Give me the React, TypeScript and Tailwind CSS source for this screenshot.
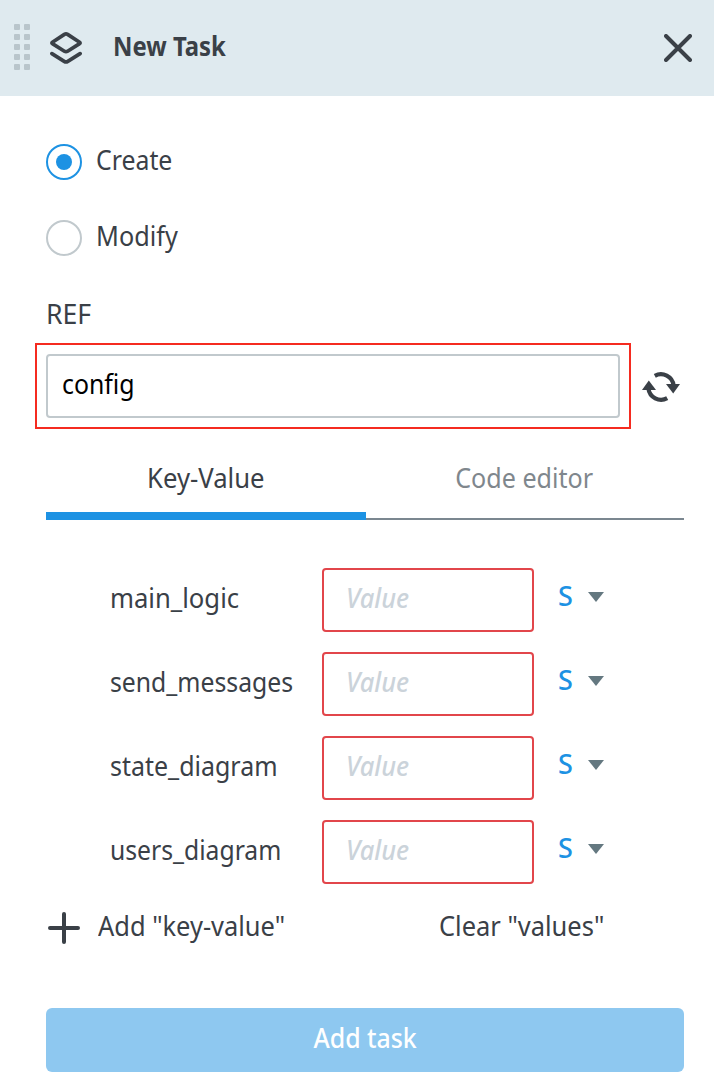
import React from 'react';

const fields = ['main_logic', 'send_messages', 'state_diagram', 'users_diagram'];

const labelScale: Record<string, string> = {
  main_logic: 'scale-x-[0.95]',
  send_messages: 'scale-x-[0.917]',
  state_diagram: 'scale-x-[0.925]',
  users_diagram: 'scale-x-[0.915]',
};

function Label({ className = '', children }: { className?: string; children: React.ReactNode }) {
  return <span className={`block whitespace-nowrap pb-1 leading-9 ${className}`}>{children}</span>;
}

function DragHandle() {
  return (
    <div className="grid grid-cols-2 gap-1">
      {Array.from({ length: 10 }, (_, i) => (
        <span key={i} className="size-1.5 rounded-[1px] bg-[#b9c5cb]" />
      ))}
    </div>
  );
}

function LayersIcon() {
  return (
    <svg className="size-8" viewBox="0 0 32 32" fill="none" stroke="currentColor" strokeWidth="3.7" strokeLinecap="round" strokeLinejoin="round">
      <path d="M14.4 2.4Q16 1.5 17.6 2.4L29.6 10.2Q30.6 10.9 29.6 11.6L17.6 19.2Q16 20.2 14.4 19.2L2.4 11.6Q1.4 10.9 2.4 10.2Z" />
      <path d="M1.9 21.6L14.2 29.4Q16 30.5 17.8 29.4L30.1 21.6" />
    </svg>
  );
}

function CloseIcon() {
  return (
    <svg className="size-7" viewBox="0 0 28 28" fill="none" stroke="currentColor" strokeWidth="4" strokeLinecap="round">
      <path d="M2 2L26 26M26 2L2 26" />
    </svg>
  );
}

function RefreshIcon() {
  return (
    <svg className="h-[30px] w-[38px]" viewBox="0 0 38 30" fill="none">
      <path d="M12.8 3.8A12.8 12.8 0 0 1 31.6 13.5" stroke="currentColor" strokeWidth="4.2" />
      <path d="M25.2 26.2A12.8 12.8 0 0 1 6.4 16.5" stroke="currentColor" strokeWidth="4.2" />
      <path d="M24 12.1H38L31.2 21.5Z" fill="currentColor" />
      <path d="M0 17.9H14L6.8 8.5Z" fill="currentColor" />
    </svg>
  );
}

function Radio({ checked, label, scale }: { checked?: boolean; label: string; scale: string }) {
  return (
    <label className="flex items-center">
      <span className={`flex size-9 items-center justify-center rounded-full border-2 ${checked ? 'border-[#1d92e3]' : 'border-[#c1c9cd]'}`}>
        {checked && <span className="size-4 rounded-full bg-[#1d92e3]" />}
      </span>
      <Label className={`ml-3.5 origin-left ${scale}`}>{label}</Label>
    </label>
  );
}

export default function App() {
  return (
    <main className="h-[1084px] w-[714px] bg-white font-['Noto_Sans',sans-serif] text-[27px] text-[#3a4047]">
      <header className="flex h-24 items-center bg-[#dfeaef] pr-[22px] pl-3.5">
        <div className="-mt-0.5">
          <DragHandle />
        </div>
        <div className="ml-5">
          <LayersIcon />
        </div>
        <Label className="ml-[31px] origin-left scale-x-[0.885] font-bold">New Task</Label>
        <button className="ml-auto">
          <CloseIcon />
        </button>
      </header>

      <section className="flex flex-col gap-9 px-[46px] pt-[46px]">
        <Radio checked label="Create" scale="scale-x-[0.92]" />
        <Radio label="Modify" scale="scale-x-[0.935]" />
      </section>

      <section className="mt-[38px] pr-[34px] pl-[35px]">
        <div className="ml-[11px] leading-9">
          <span className="block w-max origin-left scale-x-[0.985]">REF</span>
        </div>
        <div className="mt-[11px] flex items-center">
          <div className="w-[596px] border-2 border-[#f52b20] p-[9px]">
            <div className="flex h-16 items-center rounded border-2 border-[#c1c9cd] pl-3.5 text-black">
              <Label className="origin-left scale-x-[0.92]">config</Label>
            </div>
          </div>
          <button className="mt-0.5 ml-[11px]">
            <RefreshIcon />
          </button>
        </div>
      </section>

      <section className="pr-[30px] pl-[46px]">
        <nav className="mt-[31px] flex h-[60px]">
          <div className="flex w-80 justify-center border-b-8 border-[#1d92e3] pr-px">
            <Label className="scale-x-[0.95]">Key-Value</Label>
          </div>
          <div className="flex flex-1 justify-center border-b-2 border-[#7b8790] pr-px text-[#7f878d]">
            <Label className="scale-x-[0.93]">Code editor</Label>
          </div>
        </nav>

        <div className="mt-12 flex flex-col gap-5">
          {fields.map((name) => (
            <div key={name} className="flex h-16 items-center pl-16">
              <div className="w-[212px]">
                <Label className={`w-max origin-left ${labelScale[name]}`}>{name}</Label>
              </div>
              <div className="flex h-full w-[212px] items-center rounded border-2 border-[#e2464b] pl-[22px]">
                <Label className="origin-left scale-x-[0.94] font-medium text-[#cbd3da] italic">Value</Label>
              </div>
              <button className="ml-6 flex items-center pb-1 text-[#1d92e3]">
                <Label className="w-[15px] font-medium">S</Label>
                <svg className="-mt-0.5 ml-[15px] h-2.5 w-4 text-[#647880]" viewBox="0 0 16 10">
                  <path d="M0 0H16L8 10Z" fill="currentColor" />
                </svg>
              </button>
            </div>
          ))}
        </div>

        <div className="mt-6 flex h-10 items-center">
          <svg className="ml-0.5 size-8" viewBox="0 0 32 32" fill="none" stroke="currentColor" strokeWidth="4" strokeLinecap="round">
            <path d="M16 2V30M2 16H30" />
          </svg>
          <div className="ml-[18px] w-[341px]">
            <Label className="w-max origin-left scale-x-[0.942]">Add "key-value"</Label>
          </div>
          <Label className="origin-left scale-x-[0.943]">Clear "values"</Label>
        </div>

        <button className="mt-[60px] flex h-16 w-full items-center justify-center rounded-md bg-[#8ec8f0] text-white">
          <Label className="scale-x-[0.92] font-medium">Add task</Label>
        </button>
      </section>
    </main>
  );
}
